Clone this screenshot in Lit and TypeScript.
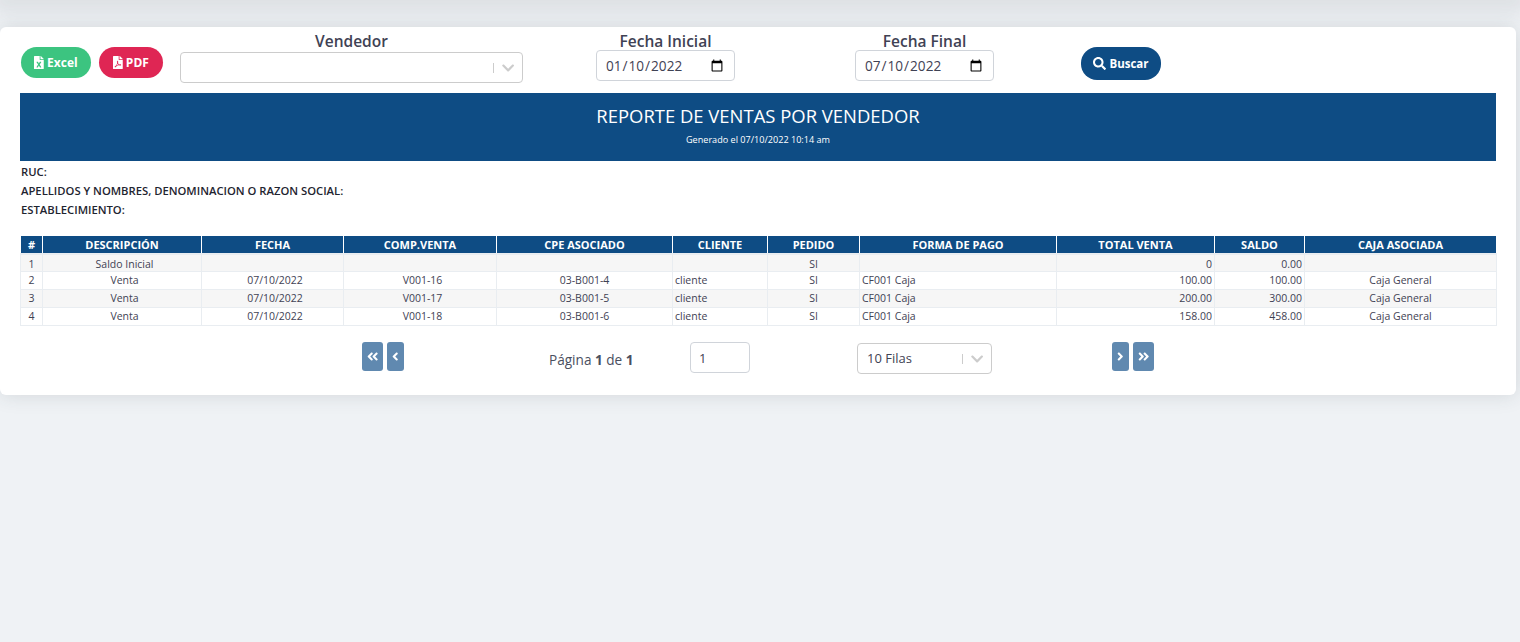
import { LitElement, html, css, svg } from "lit";
import { customElement } from "lit/decorators.js";

const icons = {
  excel: ["0 0 384 512", "M224 136V0H24C10.7 0 0 10.7 0 24v464c0 13.3 10.7 24 24 24h336c13.3 0 24-10.7 24-24V160H248c-13.2 0-24-10.8-24-24zm60.1 106.5L224 336l60.1 93.5c5.1 8-.6 18.5-10.1 18.5h-34.9c-4.4 0-8.5-2.4-10.6-6.3C208.9 405.5 192 373 192 373c-6.1 14.1-9.5 19.1-36.6 68.8-2.1 3.9-6.1 6.3-10.5 6.3H110c-9.5 0-15.2-10.5-10.1-18.5l60.3-93.5-60.3-93.5c-5.2-8 .6-18.5 10.1-18.5h34.8c4.4 0 8.5 2.4 10.6 6.3 26.1 48.8 20 33.6 36.6 68.5 0 0 6.1-11.7 36.6-68.5 2.1-3.9 6.2-6.3 10.6-6.3H274c9.5-.1 15.2 10.4 10.1 18.4zM384 121.9v6.1H256V0h6.1c6.4 0 12.5 2.5 17 7l97.9 98c4.5 4.5 7 10.6 7 16.9z"],
  pdf: ["0 0 384 512", "M181.9 256.1c-5-16-4.9-46.9-2-46.9 8.4 0 7.6 36.9 2 46.9zm-1.7 47.2c-7.7 20.2-17.3 43.3-28.4 62.7 18.3-7 39-17.2 62.9-21.9-12.7-9.6-24.9-23.4-34.5-40.8zM86.1 428.1c0 .8 13.2-5.4 34.9-40.2-6.7 6.3-29.1 24.5-34.9 40.2zM248 160h136v328c0 13.3-10.7 24-24 24H24c-13.3 0-24-10.7-24-24V24C0 10.7 10.7 0 24 0h200v136c0 13.2 10.8 24 24 24zm-8 171.8c-20-12.2-33.3-29-42.7-53.8 4.5-18.5 11.6-46.6 6.2-64.2-4.7-29.4-42.4-26.5-47.8-6.8-5 18.3-.4 44.1 8.1 77-11.6 27.6-28.7 64.6-40.8 85.8-.1 0-.1.1-.2.1-27.1 13.9-73.6 44.5-54.5 68 5.6 6.9 16 10 21.5 10 17.9 0 35.7-18 61.1-61.8 25.8-8.5 54.1-19.1 79-23.2 21.7 11.8 47.1 19.5 64 19.5 29.2 0 31.2-32 19.7-43.4-13.9-13.6-54.3-9.7-73.6-7.2zM377 105L279 7c-4.5-4.5-10.6-7-17-7h-6v128h128v-6.1c0-6.3-2.5-12.4-7-16.9zm-74.1 255.3c4.1-2.7-2.5-11.9-42.8-9 37.1 15.8 42.8 9 42.8 9z"],
  search: ["0 0 512 512", "M505 442.7L405.3 343c-4.5-4.5-10.6-7-17-7H372c27.6-35.3 44-79.7 44-128C416 93.1 322.9 0 208 0S0 93.1 0 208s93.1 208 208 208c48.3 0 92.7-16.4 128-44v16.3c0 6.4 2.5 12.5 7 17l99.7 99.7c9.4 9.4 24.6 9.4 33.9 0l28.3-28.3c9.4-9.4 9.4-24.6.1-34zM208 336c-70.7 0-128-57.2-128-128 0-70.7 57.2-128 128-128 70.7 0 128 57.2 128 128 0 70.7-57.2 128-128 128z"],
  first: ["0 0 448 512", "M223.7 239l136-136c9.4-9.4 24.6-9.4 33.9 0l22.6 22.6c9.4 9.4 9.4 24.6 0 33.9L319.9 256l96.4 96.4c9.4 9.4 9.4 24.6 0 33.9L393.7 409c-9.4 9.4-24.6 9.4-33.9 0l-136-136c-9.5-9.4-9.5-24.6-.1-34zm-192 34l136 136c9.4 9.4 24.6 9.4 33.9 0l22.6-22.6c9.4-9.4 9.4-24.6 0-33.9L127.9 256l96.4-96.4c9.4-9.4 9.4-24.6 0-33.9L201.7 103c-9.4-9.4-24.6-9.4-33.9 0l-136 136c-9.5 9.4-9.5 24.6-.1 34z"],
  prev: ["0 0 256 512", "M31.7 239l136-136c9.4-9.4 24.6-9.4 33.9 0l22.6 22.6c9.4 9.4 9.4 24.6 0 33.9L127.9 256l96.4 96.4c9.4 9.4 9.4 24.6 0 33.9L201.7 409c-9.4 9.4-24.6 9.4-33.9 0l-136-136c-9.5-9.4-9.5-24.6-.1-34z"],
  next: ["0 0 256 512", "M224.3 273l-136 136c-9.4 9.4-24.6 9.4-33.9 0l-22.6-22.6c-9.4-9.4-9.4-24.6 0-33.9l96.4-96.4-96.4-96.4c-9.4-9.4-9.4-24.6 0-33.9L54.3 103c9.4-9.4 24.6-9.4 33.9 0l136 136c9.5 9.4 9.5 24.6.1 34z"],
  last: ["0 0 448 512", "M224.3 273l-136 136c-9.4 9.4-24.6 9.4-33.9 0l-22.6-22.6c-9.4-9.4-9.4-24.6 0-33.9l96.4-96.4-96.4-96.4c-9.4-9.4-9.4-24.6 0-33.9L54.3 103c9.4-9.4 24.6-9.4 33.9 0l136 136c9.5 9.4 9.5 24.6.1 34zm192-34l-136-136c-9.4-9.4-24.6-9.4-33.9 0l-22.6 22.6c-9.4 9.4-9.4 24.6 0 33.9l96.4 96.4-96.4 96.4c-9.4 9.4-9.4 24.6 0 33.9l22.6 22.6c9.4 9.4 24.6 9.4 33.9 0l136-136c9.4-9.2 9.4-24.4 0-33.8z"],
  chevron: ["0 0 448 512", "M207 381.5L12.7 187.1c-9.4-9.4-9.4-24.6 0-33.9l22.7-22.7c9.4-9.4 24.5-9.4 33.9 0L224 284.5l154.7-154c9.4-9.3 24.5-9.3 33.9 0l22.7 22.7c9.4 9.4 9.4 24.6 0 33.9L241 381.5c-9.4 9.4-24.6 9.4-34 0z"],
} as const;

const icon = (n: keyof typeof icons, cls = "") =>
  html`<svg class="ic ${cls}" viewBox=${icons[n][0]} fill="currentColor">${svg`<path d=${icons[n][1]}></path>`}</svg>`;

const COLS = [22, 159, 142, 153, 176, 95, 92, 197, 158, 90, 192];
const HEAD = ["#", "DESCRIPCIÓN", "FECHA", "COMP.VENTA", "CPE ASOCIADO", "CLIENTE", "PEDIDO", "FORMA DE PAGO", "TOTAL VENTA", "SALDO", "CAJA ASOCIADA"];
const ROWS = [
  ["1", "Saldo Inicial", "", "", "", "", "SI", "", "0", "0.00", ""],
  ["2", "Venta", "07/10/2022", "V001-16", "03-B001-4", "cliente", "SI", "CF001 Caja", "100.00", "100.00", "Caja General"],
  ["3", "Venta", "07/10/2022", "V001-17", "03-B001-5", "cliente", "SI", "CF001 Caja", "200.00", "300.00", "Caja General"],
  ["4", "Venta", "07/10/2022", "V001-18", "03-B001-6", "cliente", "SI", "CF001 Caja", "158.00", "458.00", "Caja General"],
];
const ALIGN = ["c", "c s", "c s", "c s", "c", "l", "c", "l", "r", "r", "c"];

@customElement("app-root")
export class AppRoot extends LitElement {
  static styles = css`
    :host { display: block; min-height: 642px; background: #eff2f5; font-family: "Open Sans", "Noto Sans", sans-serif; color: #3f4254; overflow: hidden; }
    .topshade { height: 0; box-shadow: 0 0 20px 8px rgba(60, 70, 80, 0.15); }
    .card { margin: 27px 4px 0 0; height: 368px; box-sizing: border-box; background: #fff; border-radius: 6px; box-shadow: 0 0 20px rgba(50, 60, 70, 0.15); }
    .ic { display: block; height: 13px; }
    .toolbar { display: flex; align-items: flex-start; height: 66px; box-sizing: border-box; padding: 6px 0 0 21px; }
    .pill { display: flex; align-items: center; justify-content: center; gap: 3px; box-sizing: border-box; height: 31px; margin-top: 14px; border-radius: 16px; color: #fff; font-size: 12px; font-weight: 700; }
    .excel { width: 70px; background: #3cc480; }
    .pdf { width: 64px; margin-left: 8px; background: #df2654; }
    .buscar { width: 80px; height: 33px; margin-left: 87px; background: #0e4c84; }
    .buscar span { font-size: 11.5px; }
    .field { display: flex; flex-direction: column; align-items: center; }
    .label { font-size: 15.5px; font-weight: 600; line-height: 17px; color: #3f4254; }
    .vend { width: 343px; margin-left: 17px; }
    .select { display: flex; align-items: center; box-sizing: border-box; background: #fff; border: 1px solid #ccc; border-radius: 4px; height: 31px; color: #3f4254; }
    .vend .select { width: 100%; margin-top: 2px; }
    .grow { flex: 1; }
    .sep { width: 1px; height: 10px; background: #ccc; }
    .chev { height: 14px; margin: 0 8px 0 8px; color: #ccc; }
    .d1 { margin-left: 73px; }
    .d2 { margin-left: 120px; }
    input { box-sizing: border-box; font-family: inherit; color: #3f4254; background: #fff; border: 1px solid #d0d4da; border-radius: 4px; outline: none; }
    input[type="date"] { width: 139px; height: 31px; padding: 0 8px; font-size: 13.6px; }
    .banner { margin: 0 20px; width: 1476px; height: 68px; box-sizing: border-box; background: #0e4c84; color: #fff; display: flex; flex-direction: column; align-items: center; padding-top: 10px; }
    .banner h1 { margin: 0; font-size: 18.45px; font-weight: 400; line-height: 25px; }
    .banner p { margin: 5px 0 0; font-size: 9.1px; line-height: 14px; }
    .meta { margin: 1px 0 0 21px; font-size: 11.25px; font-weight: 600; color: #1e2430; line-height: 19px; }
    table { margin: 17px 0 0 20px; width: 1476px; table-layout: fixed; border-collapse: collapse; font-size: 10.5px; color: #3f4254; }
    th { height: 17px; padding: 0; background: #0e4c84; color: #fff; font-weight: 700; font-size: 11px; line-height: 14px; border: 1px solid #fff; border-top: 0; border-bottom: 2px solid #e9edf1; text-align: center; }
    td { height: 16px; padding: 0 2px 1px; line-height: 14px; border: 1px solid #e9edf1; white-space: nowrap; overflow: hidden; }
    tbody tr:first-child td { height: 15px; padding: 1px 2px 0; }
    tr.odd td { background: #f6f6f6; }
    .c { text-align: center; }
    .l { text-align: left; }
    .r { text-align: right; }
    td.s, tbody tr:first-child td.s { padding-left: 7px; }
    .pager { display: flex; align-items: flex-start; margin: 16px 0 0 362px; }
    .pg { display: flex; align-items: center; justify-content: center; height: 29px; border-radius: 3px; background: #6089b0; color: #fff; }
    .w21 { width: 21px; }
    .w17 { width: 17px; margin-left: 4px; }
    .w17b { width: 17px; margin-left: 120px; }
    .w21b { width: 21px; margin-left: 4px; }
    .pinfo { margin: 9px 0 0 145px; width: 141px; font-size: 13.6px; line-height: 18px; color: #4a4f60; }
    .pinfo b { font-weight: 700; }
    .pinput { width: 60px; height: 31px; padding: 0 8px; font-size: 13px; }
    .psel { width: 135px; margin: 1px 0 0 107px; padding-left: 9px; font-size: 13px; }
    .psel span:first-child { padding-bottom: 2px; }
  `;

  render() {
    return html`
      <div class="topshade"></div>
      <div class="card">
        <div class="toolbar">
          <div class="pill excel">${icon("excel")}<span>Excel</span></div>
          <div class="pill pdf">${icon("pdf")}<span>PDF</span></div>
          <div class="field vend">
            <div class="label">Vendedor</div>
            <div class="select"><span class="grow"></span><span class="sep"></span>${icon("chevron", "chev")}</div>
          </div>
          <div class="field d1"><div class="label">Fecha Inicial</div><input type="date" value="2022-01-10" /></div>
          <div class="field d2"><div class="label">Fecha Final</div><input type="date" value="2022-07-10" /></div>
          <div class="pill buscar">${icon("search")}<span>Buscar</span></div>
        </div>
        <div class="banner">
          <h1>REPORTE DE VENTAS POR VENDEDOR</h1>
          <p>Generado el 07/10/2022 10:14 am</p>
        </div>
        <div class="meta">
          <div>RUC:</div>
          <div>APELLIDOS Y NOMBRES, DENOMINACION O RAZON SOCIAL:</div>
          <div>ESTABLECIMIENTO:</div>
        </div>
        <table>
          <colgroup>${COLS.map((w) => html`<col style="width:${w}px" />`)}</colgroup>
          <thead><tr>${HEAD.map((h) => html`<th>${h}</th>`)}</tr></thead>
          <tbody>
            ${ROWS.map((r, i) => html`<tr class=${i % 2 === 0 ? "odd" : ""}>${r.map((c, j) => html`<td class=${ALIGN[j]}>${c}</td>`)}</tr>`)}
          </tbody>
        </table>
        <div class="pager">
          <div class="pg w21">${icon("first")}</div>
          <div class="pg w17">${icon("prev")}</div>
          <div class="pinfo">Página <b>1</b> de <b>1</b></div>
          <input class="pinput" type="text" value="1" />
          <div class="select psel"><span>10 Filas</span><span class="grow"></span><span class="sep"></span>${icon("chevron", "chev")}</div>
          <div class="pg w17b">${icon("next")}</div>
          <div class="pg w21b">${icon("last")}</div>
        </div>
      </div>
    `;
  }
}
